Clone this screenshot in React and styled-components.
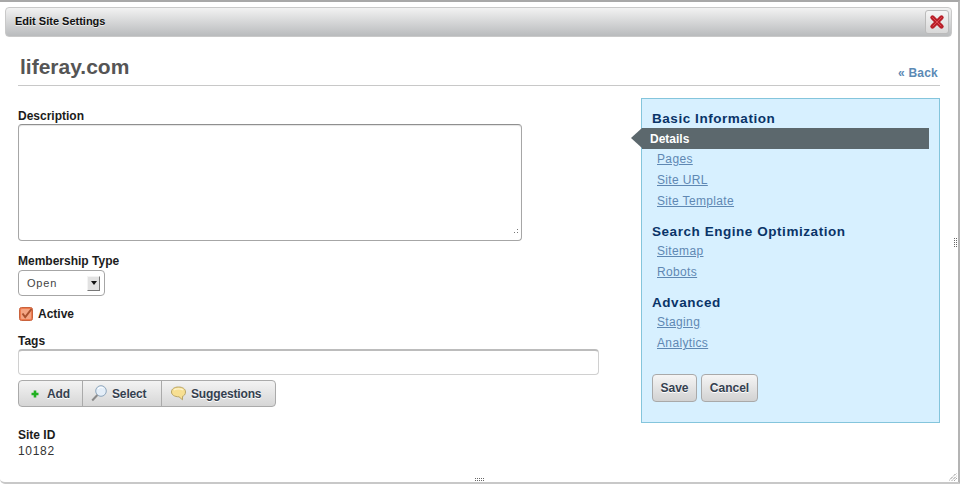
// Edit Site Settings dialog
import React from 'react';
import styled, { createGlobalStyle } from 'styled-components';

const FONT = '"Liberation Sans", Arial, sans-serif';

const GlobalStyle = createGlobalStyle`
	html, body {
		margin: 0;
		padding: 0;
		background: #fff;
	}
	body {
		width: 960px;
		height: 484px;
		overflow: hidden;
		font-family: ${FONT};
		font-size: 12px;
		color: #222;
	}
`;

const Dialog = styled.div`
	position: relative;
	box-sizing: border-box;
	width: 960px;
	height: 484px;
	padding: 5px 6px 0 5px;
	background: #fff;
	border-top: 2px solid #a8a8a8;
	border-bottom: 2px solid #c8c8c8;
	border-right: 2px solid #b4b4b4;
	border-radius: 0 0 0 5px;
`;

const TitleBar = styled.div`
	display: flex;
	align-items: center;
	justify-content: space-between;
	box-sizing: border-box;
	width: 947px;
	height: 30px;
	padding: 0 2px 0 9px;
	border: 1px solid #c9c9c9;
	border-radius: 4px;
	background: linear-gradient(#f2f2f2, #b9bbbd);
`;

const DialogTitle = styled.span`
	margin-bottom: 2px;
	font-size: 11px;
	font-weight: bold;
	color: #111;
	text-shadow: 0 1px 0 #eee;
`;

const CloseButton = styled.div`
	display: flex;
	align-items: center;
	justify-content: center;
	box-sizing: border-box;
	width: 24px;
	height: 24px;
	border: 1px solid #bbb;
	border-radius: 3px;
	background: linear-gradient(#f5f5f5, #d8d8d8);
`;

const Body = styled.div`
	padding: 0 13px;
`;

const PageHeader = styled.div`
	display: flex;
	align-items: flex-end;
	justify-content: space-between;
	box-sizing: border-box;
	width: 922px;
	height: 49px;
	padding: 0 2px 5px 2px;
	border-bottom: 1px solid #c8c8c8;
`;

const SiteName = styled.h1`
	margin: 0 0 1px 0;
	font-size: 21px;
	line-height: 24px;
	font-weight: bold;
	color: #555;
`;

const BackLink = styled.a`
	font-size: 12px;
	line-height: 14px;
	font-weight: bold;
	letter-spacing: 0.2px;
	color: #5b8ab5;
`;

const Columns = styled.div`
	display: flex;
	justify-content: space-between;
	width: 922px;
	padding-top: 12px;
`;

const FormColumn = styled.div`
	width: 581px;
	padding-top: 11px;
`;

const Label = styled.div`
	font-size: 12px;
	line-height: 14px;
	font-weight: bold;
	color: #1c1c1c;
`;

const TextArea = styled.div`
	position: relative;
	box-sizing: border-box;
	width: 504px;
	height: 117px;
	margin: 1px 0 13px;
	border: 1px solid #a6a6a6;
	border-top-color: #8f8f8f;
	border-radius: 4px;
	box-shadow: inset 0 1px 1px #e4e4e4;
`;

const ResizeDots = styled.span`
	position: absolute;
	right: 3px;
	bottom: 7px;
	width: 4px;
	height: 4px;
	background:
		linear-gradient(#777, #777) 3px 0 / 1px 1px no-repeat,
		linear-gradient(#777, #777) 0 3px / 1px 1px no-repeat,
		linear-gradient(#777, #777) 3px 3px / 1px 1px no-repeat;
`;

const SelectBox = styled.div`
	display: flex;
	align-items: center;
	justify-content: space-between;
	box-sizing: border-box;
	width: 87px;
	height: 26px;
	margin: 2px 0 10px;
	padding: 0 4px 0 8px;
	border: 1px solid #a6a6a6;
	border-radius: 4px;
	font-size: 11px;
	letter-spacing: 0.8px;
	color: #444;
`;

const SelectArrow = styled.span`
	display: flex;
	align-items: center;
	justify-content: center;
	box-sizing: border-box;
	width: 13px;
	height: 15px;
	background: #e2e2e2;
	border: 1px solid;
	border-color: #f4f4f4 #777 #777 #f4f4f4;

	&::after {
		content: '';
		border-left: 3px solid transparent;
		border-right: 3px solid transparent;
		border-top: 4px solid #111;
	}
`;

const CheckRow = styled.div`
	display: flex;
	align-items: center;
	gap: 5px;
	height: 16px;
	margin: 0 0 12px 1px;
`;

const TagsInput = styled.div`
	box-sizing: border-box;
	width: 581px;
	height: 26px;
	margin: 1px 0 5px;
	border: 1px solid #d0d0d0;
	border-top: 2px solid #bcbcbc;
	border-radius: 4px;
`;

const ButtonGroup = styled.div`
	display: inline-flex;
	height: 27px;
	box-sizing: border-box;
	border: 1px solid #aaa;
	border-radius: 4px;
	background: linear-gradient(#f3f3f3, #d6d6d6);
	overflow: hidden;
`;

const GroupButton = styled.div`
	display: flex;
	align-items: center;
	box-sizing: border-box;
	width: ${(props) => props.width}px;
	gap: ${(props) => props.gap}px;
	padding-left: ${(props) => props.left}px;
	border-left: ${(props) => (props.first ? 'none' : '1px solid #aaa')};
	font-size: 12px;
	font-weight: bold;
	letter-spacing: -0.15px;
	color: #34404f;
	text-shadow: 0 1px 0 #fff;
`;

const SiteId = styled.div`
	margin-top: 21px;
`;

const IdValue = styled.div`
	margin-top: 2px;
	font-size: 12px;
	line-height: 14px;
	letter-spacing: 0.7px;
	color: #333;
`;

const Panel = styled.div`
	box-sizing: border-box;
	width: 299px;
	height: 325px;
	padding: 12px 10px 0 10px;
	background: #d7f0ff;
	border: 1px solid #84c5dc;
`;

const SectionTitle = styled.div`
	height: 17px;
	font-size: 13.5px;
	line-height: 16px;
	font-weight: bold;
	letter-spacing: 0.55px;
	color: #0a3468;
	margin-top: ${(props) => props.top || 0}px;
`;

const ActiveItem = styled.div`
	position: relative;
	box-sizing: border-box;
	width: 287px;
	height: 21px;
	margin-left: -10px;
	padding-left: 8px;
	background: #5c686d;
	font-size: 12px;
	line-height: 23px;
	font-weight: bold;
	color: #fff;

	&::before {
		content: '';
		position: absolute;
		left: -11px;
		top: 0;
		border-top: 10.5px solid transparent;
		border-bottom: 10.5px solid transparent;
		border-right: 11px solid #5c686d;
	}
`;

const NavLink = styled.a`
	display: block;
	height: 21px;
	margin-left: 5px;
	font-size: 12px;
	line-height: 21px;
	letter-spacing: 0.35px;
	color: #5f88b3;
	text-decoration: underline;
`;

const PanelActions = styled.div`
	display: flex;
	gap: 4px;
	margin-top: 20px;
`;

const PanelButton = styled.div`
	display: flex;
	align-items: center;
	justify-content: center;
	box-sizing: border-box;
	width: ${(props) => props.width}px;
	height: 28px;
	border: 1px solid #a9a9a9;
	border-radius: 4px;
	background: linear-gradient(#f5f5f5, #d2d2d2);
	font-size: 12px;
	font-weight: bold;
	color: #34404f;
	text-shadow: 0 1px 0 #fff;
`;

// dotted grips sit on the window edge
const Grip = styled.svg`
	position: absolute;
	right: ${(props) => props.right}px;
	bottom: ${(props) => props.bottom}px;
`;

const CloseIcon = () => (
	<svg width="16" height="16" viewBox="0 0 16 16">
		<path d="M3.5 3.5 L12.5 12.5 M12.5 3.5 L3.5 12.5" stroke="#b81f28" strokeWidth="4.4" strokeLinecap="round" />
		<path d="M3.5 3.5 L12 12 M12.5 3.5 L4 12" stroke="#dd4a52" strokeWidth="1" strokeLinecap="round" />
	</svg>
);

const CheckIcon = () => (
	<svg width="14" height="14" viewBox="0 0 14 14">
		<rect x="0.5" y="0.5" width="13" height="13" rx="2" fill="#ee7c50" stroke="#c9623c" />
		<rect x="2" y="2" width="10" height="10" rx="1" fill="#f4a583" />
		<path d="M3.5 6.5 L6.2 10 L12.5 2" fill="none" stroke="#a9512e" strokeWidth="2" />
	</svg>
);

const PlusIcon = () => (
	<svg width="8" height="8" viewBox="0 0 8 8">
		<path d="M4 0.5 V7.5 M0.5 4 H7.5" stroke="#22b022" strokeWidth="2.6" />
	</svg>
);

const SearchIcon = () => (
	<svg width="16" height="17" viewBox="0 0 16 17">
		<circle cx="10" cy="6" r="5.3" fill="#e4eef8" stroke="#8ea6bc" />
		<path d="M7 4 A 3.5 3.5 0 0 1 12 3" fill="none" stroke="#fff" strokeWidth="1" />
		<path d="M6.4 10 L1.2 15.5" stroke="#8a8a8a" strokeWidth="2" />
	</svg>
);

const BubbleIcon = () => (
	<svg width="15" height="15" viewBox="0 0 15 15">
		<path d="M7.5 1 C11.5 1 14.5 2.8 14.5 6 C14.5 8.6 12.8 10 11.5 10.3 L11.5 13.8 L8 10.8 C3.5 10.8 0.5 8.8 0.5 6 C0.5 2.8 3.5 1 7.5 1 Z" fill="#f7df92" stroke="#b9a566" />
		<path d="M3 4 C5 2.5 10 2.5 12 4" fill="none" stroke="#fdf4cf" strokeWidth="1.2" />
	</svg>
);

const GripIcon = ({ cols, rows, right, bottom }) => {
	const dots = [];
	for (let r = 0; r < rows; r += 1) {
		for (let c = 0; c < cols; c += 1) {
			dots.push(<rect key={`${r}-${c}`} x={c * 2} y={r * 2} width="1" height="1" fill="#666" />);
		}
	}
	return (
		<Grip right={right} bottom={bottom} width={cols * 2} height={rows * 2}>
			{dots}
		</Grip>
	);
};

const CornerIcon = () => (
	<Grip right={1} bottom={1} width="8" height="8" viewBox="0 0 8 8">
		<path d="M0 7.5 L7.5 0 M3 7.5 L7.5 3 M5.5 7.5 L7.5 5.5" stroke="#555" strokeWidth="1" strokeDasharray="1 1" />
	</Grip>
);

const sections = [
	{ title: 'Search Engine Optimization', top: 12, links: ['Sitemap', 'Robots'] },
	{ title: 'Advanced', top: 12, links: ['Staging', 'Analytics'] },
];

const App = () => (
	<>
		<GlobalStyle />
		<Dialog>
			<TitleBar>
				<DialogTitle>Edit Site Settings</DialogTitle>
				<CloseButton><CloseIcon /></CloseButton>
			</TitleBar>
			<Body>
				<PageHeader>
					<SiteName>liferay.com</SiteName>
					<BackLink>« Back</BackLink>
				</PageHeader>
				<Columns>
					<FormColumn>
						<Label>Description</Label>
						<TextArea><ResizeDots /></TextArea>
						<Label>Membership Type</Label>
						<SelectBox>
							Open
							<SelectArrow />
						</SelectBox>
						<CheckRow>
							<CheckIcon />
							<Label>Active</Label>
						</CheckRow>
						<Label>Tags</Label>
						<TagsInput />
						<ButtonGroup>
							<GroupButton first width={63} gap={8} left={12}><PlusIcon />Add</GroupButton>
							<GroupButton width={79} gap={5} left={8}><SearchIcon />Select</GroupButton>
							<GroupButton width={114} gap={5} left={9}><BubbleIcon />Suggestions</GroupButton>
						</ButtonGroup>
						<SiteId>
							<Label>Site ID</Label>
							<IdValue>10182</IdValue>
						</SiteId>
					</FormColumn>
					<Panel>
						<SectionTitle>Basic Information</SectionTitle>
						<ActiveItem>Details</ActiveItem>
						<NavLink>Pages</NavLink>
						<NavLink>Site URL</NavLink>
						<NavLink>Site Template</NavLink>
						{sections.map((section) => (
							<div key={section.title}>
								<SectionTitle top={section.top}>{section.title}</SectionTitle>
								{section.links.map((link) => (
									<NavLink key={link}>{link}</NavLink>
								))}
							</div>
						))}
						<PanelActions>
							<PanelButton width={45}>Save</PanelButton>
							<PanelButton width={57}>Cancel</PanelButton>
						</PanelActions>
					</Panel>
				</Columns>
			</Body>
			<GripIcon cols={5} rows={2} right={473} bottom={0} />
			<GripIcon cols={2} rows={5} right={0} bottom={234} />
			<CornerIcon />
		</Dialog>
	</>
);

export default App;
